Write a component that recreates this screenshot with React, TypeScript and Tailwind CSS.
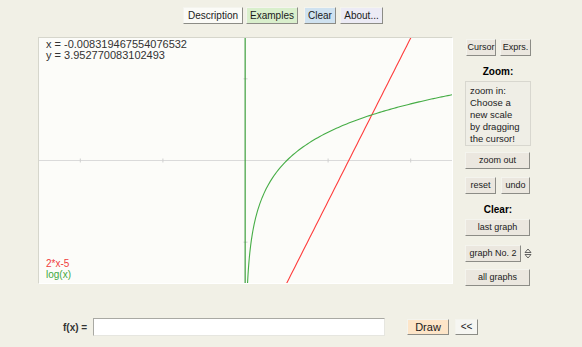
import React from "react";

const W = 413;
const H = 245;
const toX = (x: number) => ((x + 5) / 10) * W;
const toY = (y: number) => H - ((y + 3) / 6) * H;

function redPath() {
  const pts: string[] = [];
  for (let x = 0.9; x <= 4.1; x += 0.05) {
    pts.push(`${toX(x).toFixed(2)},${toY(2 * x - 5).toFixed(2)}`);
  }
  return "M" + pts.join(" L");
}

function greenPath() {
  const pts: string[] = [];
  const xs: number[] = [];
  for (let x = Math.exp(-3.1); x < 0.3; x *= 1.08) xs.push(x);
  for (let x = 0.3; x <= 5.05; x += 0.05) xs.push(x);
  xs.forEach((x) => pts.push(`${toX(x).toFixed(2)},${toY(Math.log(x)).toFixed(2)}`));
  return "M" + pts.join(" L");
}

const btn =
  "flex items-center justify-center border border-t-[#f4f4ee] border-l-[#f4f4ee] border-r-[#8c8c86] border-b-[#8c8c86] text-[10px] text-[#1a1a1a] leading-none whitespace-nowrap";
const side =
  "flex items-center justify-center border border-t-[#f4f4ee] border-l-[#f4f4ee] border-r-[#8c8c86] border-b-[#8c8c86] text-[9px] text-[#1a1a1a] leading-none whitespace-nowrap bg-[#ebe7df] h-[17px]";

export default function App() {
  return (
    <div className="w-[582px] h-[347px] bg-[#f1f0e6] font-['Liberation_Sans',Arial,sans-serif] overflow-hidden">
      {/* top bar */}
      <div className="flex pt-[7px] pl-[183px]">
        <div className={btn + " w-[60px] h-[17px] bg-[#fbfbf7]"}>Description</div>
        <div className={btn + " w-[52px] h-[17px] bg-[#d9efcc] ml-[3px]"}>Examples</div>
        <div className={btn + " w-[32px] h-[17px] bg-[#cfe2f0] ml-[6px]"}>Clear</div>
        <div className={btn + " w-[43px] h-[17px] bg-[#ecebf5] ml-[4px]"}>About...</div>
      </div>

      <div className="flex mt-[13px] pl-[38px]">
        {/* graph */}
        <div className="relative w-[415px] h-[247px] bg-[#fcfcf9] border border-t-[#d6d6cc] border-l-[#d6d6cc] border-r-[#ffffff] border-b-[#ffffff]">
          <svg width={W} height={H} className="absolute left-0 top-0">
            <line x1={0} y1={toY(0)} x2={W} y2={toY(0)} stroke="#dadada" strokeWidth={1} />
            {[-4, -2, 2, 4].map((t) => (
              <line key={t} x1={toX(t)} y1={toY(0) - 2} x2={toX(t)} y2={toY(0) + 2} stroke="#cfcfcf" />
            ))}
            {[-2, 2].map((t) => (
              <line key={t} x1={toX(0) - 2} y1={toY(t)} x2={toX(0) + 2} y2={toY(t)} stroke="#cfcfcf" />
            ))}
            <path d={redPath()} fill="none" stroke="#ff3c3c" strokeWidth={1.1} />
            <path d={greenPath()} fill="none" stroke="#46ad46" strokeWidth={1.1} />
            <line x1={toX(-0.0083)} y1={0} x2={toX(-0.0083)} y2={H} stroke="#3d9e3d" strokeWidth={1.2} />
          </svg>
          <div className="absolute left-[7px] top-[1px] text-[11px] leading-[11px] text-[#333]">
            <div>x = -0.008319467554076532</div>
            <div>y = 3.952770083102493</div>
          </div>
          <div className="absolute left-[7px] bottom-[3px] text-[10px] leading-[11px]">
            <div className="text-[#f03c3c]">2*x-5</div>
            <div className="text-[#3fa83f]">log(x)</div>
          </div>
        </div>

        {/* right panel */}
        <div className="ml-[12px] w-[66px] flex flex-col items-start">
          <div className="flex mt-[2px] ml-[1px]">
            <div className={side + " w-[30px]"}>Cursor</div>
            <div className={side + " w-[31px] ml-[4px]"}>Exprs.</div>
          </div>
          <div className="w-[66px] text-center font-bold text-[10px] mt-[10px] leading-[12px]">Zoom:</div>
          <div className="mt-[3px] w-[66px] h-[65px] border border-[#d8d7cf] bg-[#efeee6] pl-[4px] pt-[3px] text-[9.5px] leading-[12px] text-[#222]">
            <div>zoom in:</div>
            <div>Choose a</div>
            <div>new scale</div>
            <div>by dragging</div>
            <div>the cursor!</div>
          </div>
          <div className={side + " w-[65px] mt-[6px]"}>zoom out</div>
          <div className="flex mt-[8px]">
            <div className={side + " w-[31px] h-[16px]"}>reset</div>
            <div className={side + " w-[29px] h-[16px] ml-[5px]"}>undo</div>
          </div>
          <div className="w-[66px] text-center font-bold text-[10px] mt-[10px] leading-[12px]">Clear:</div>
          <div className={side + " w-[65px] h-[16px] mt-[3px]"}>last graph</div>
          <div className="flex items-center mt-[9px]">
            <div className={side + " w-[56px]"}>graph No. 2</div>
            <svg width="8" height="11" className="ml-[3px]" viewBox="0 0 8 11">
              <path d="M1 4.5 L4 1 L7 4.5 Z" fill="none" stroke="#555" strokeWidth="0.9" />
              <path d="M1 6.5 L4 10 L7 6.5 Z" fill="none" stroke="#555" strokeWidth="0.9" />
            </svg>
          </div>
          <div className={side + " w-[65px] h-[16px] mt-[7px]"}>all graphs</div>
        </div>
      </div>

      {/* bottom row */}
      <div className="flex items-center mt-[32px] pl-[63px]">
        <div className="text-[10px] font-bold text-[#333] w-[30px]">f(x) =</div>
        <div className="w-[292px] h-[18px] bg-white border border-t-[#a9a9a3] border-l-[#a9a9a3] border-r-[#e6e6e0] border-b-[#e6e6e0]" />
        <div className={btn + " w-[42px] h-[16px] bg-[#fde5c8] ml-[22px] text-[11px]"}>Draw</div>
        <div className={btn + " w-[23px] h-[16px] bg-[#f6f6f2] ml-[6px]"}>&lt;&lt;</div>
      </div>
    </div>
  );
}
